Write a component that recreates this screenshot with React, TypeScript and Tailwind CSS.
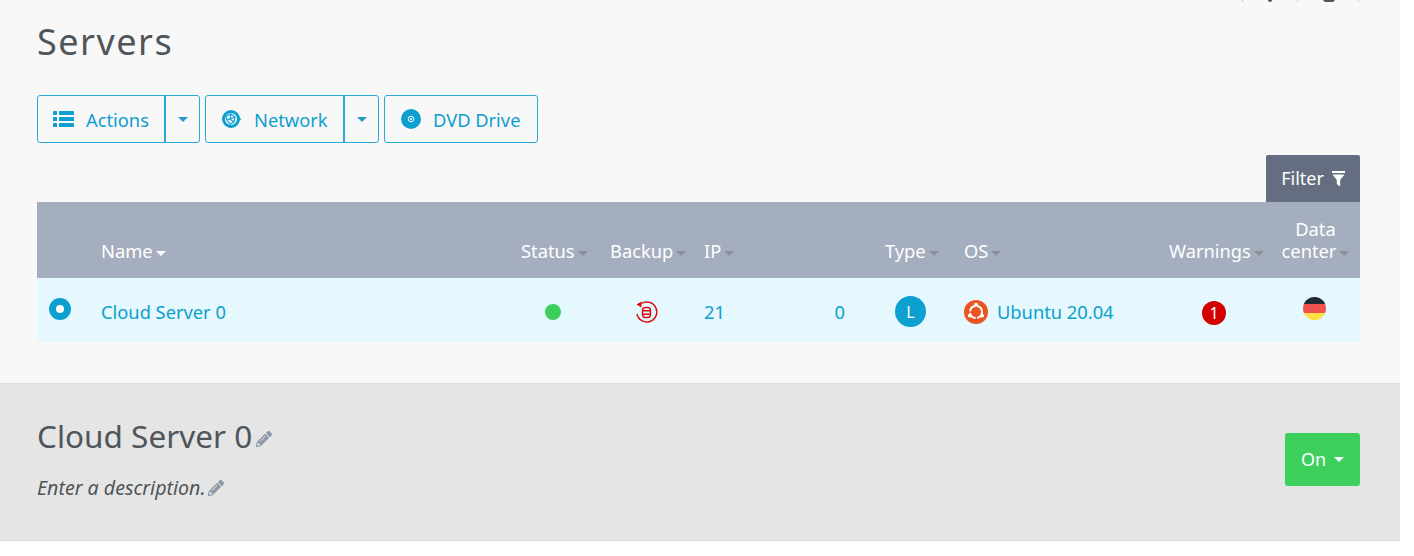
import React from "react";
import { FaPencilAlt } from "react-icons/fa";

const Caret = ({ className }: { className: string }) => (
    <span className={`inline-block w-0 h-0 border-x-[5px] border-x-transparent border-t-[5px] ${className}`} />
);

const ListIcon = () => (
    <svg width="21" height="16" viewBox="0 0 21 16" fill="#0d9fd0">
        <rect x="0" y="0" width="4" height="4" rx="0.5" />
        <rect x="6" y="0" width="15" height="4" rx="0.5" />
        <rect x="0" y="6" width="4" height="4" rx="0.5" />
        <rect x="6" y="6" width="15" height="4" rx="0.5" />
        <rect x="0" y="12" width="4" height="4" rx="0.5" />
        <rect x="6" y="12" width="15" height="4" rx="0.5" />
    </svg>
);

const NetworkIcon = () => (
    <svg width="20" height="18" viewBox="0 0 20 18">
        <circle cx="9" cy="9" r="7.5" fill="none" stroke="#0d9fd0" strokeWidth="3" />
        <path d="M16.5 7l3 2-3 2z" fill="#0d9fd0" />
        <path d="M4 6l5-2 4 3-1 5-4 2-3-4zM9 4l-1 5 5-2M8 9l-3 1M8 9l4 3" fill="none" stroke="#0d9fd0" strokeWidth="1.2" />
    </svg>
);

const DvdIcon = () => (
    <svg width="20" height="20" viewBox="0 0 20 20">
        <circle cx="10" cy="10" r="10" fill="#0d9fd0" />
        <circle cx="10" cy="10" r="2.8" fill="none" stroke="#fff" strokeWidth="1" />
        <circle cx="10" cy="10" r="1" fill="#fff" />
    </svg>
);

const BackupIcon = () => (
    <svg width="24" height="24" viewBox="0 0 24 24" fill="none" stroke="#d90b0b" strokeWidth="1.4">
        <path d="M6.5 3.5A10 10 0 1 1 2 14" />
        <path d="M1.5 4.5L6.5 1.5V7.5z" fill="#d90b0b" stroke="none" />
        <rect x="7.5" y="7.5" width="8" height="10" rx="3" />
        <path d="M7.5 10.8h8M7.5 14.2h8" />
    </svg>
);

const UbuntuIcon = () => (
    <svg width="24" height="24" viewBox="0 0 24 24">
        <circle cx="12" cy="12" r="12" fill="#e95420" />
        <circle cx="12" cy="12" r="6" fill="none" stroke="#fff" strokeWidth="2" strokeDasharray="8 1.5" />
        <circle cx="12" cy="4.6" r="1.8" fill="#fff" />
        <circle cx="5.6" cy="15.7" r="1.8" fill="#fff" />
        <circle cx="18.4" cy="15.7" r="1.8" fill="#fff" />
    </svg>
);

const FlagIcon = () => (
    <span className="flex flex-col w-[23px] h-[23px] rounded-full overflow-hidden">
        <span className="h-[7px] bg-[#1f2a33]" />
        <span className="h-[9px] bg-[#ef5350]" />
        <span className="h-[7px] bg-[#fde047]" />
    </span>
);

const Head = ({ label, active, center }: { label: React.ReactNode; active?: boolean; center?: boolean }) => (
    <th className={`font-normal align-bottom pb-[16px] leading-[22px] whitespace-nowrap ${center ? "text-center" : "text-left px-3"}`}>
        {label}
        <Caret className={`ml-[3px] align-middle ${active ? "border-t-white" : "border-t-[#8a8f99]"}`} />
    </th>
);

export default function App() {
    return (
        <div className="w-[1414px] h-[556px] bg-white overflow-hidden font-['Noto_Sans',sans-serif]">
            <div className="w-[1400px]">
                <div className="relative h-[383px] bg-[#f8f8f8] pl-[37px] pr-[40px] pt-[18px]">
                    <div className="absolute top-[-4px] left-[1242px] flex items-center gap-[25px]">
                        <span className="w-[1px] h-[6px] bg-[#ccc]" />
                        <span className="w-[4px] h-[6px] rounded-full bg-[#555]" />
                        <span className="w-[1px] h-[6px] bg-[#ccc]" />
                        <span className="w-[12px] h-[6px] rounded-full bg-[#555]" />
                        <span className="w-[1px] h-[6px] bg-[#ccc] -ml-[2px]" />
                    </div>
                    <h1 className="text-[36px] leading-[48px] tracking-[1.5px] text-[#4f5559]">Servers</h1>

                    <div className="flex gap-[5px] mt-[29px] text-[18.3px] text-[#0d9fd0]">
                        <div className="flex h-[48px] border border-[#2aa9d4] rounded-[3px]">
                            <div className="flex items-center w-[128px] pl-[15px] gap-[12px] border-r-2 border-[#2aa9d4]">
                                <ListIcon />
                                <span className="pt-[2px]">Actions</span>
                            </div>
                            <div className="flex items-center justify-center w-[33px]">
                                <Caret className="border-t-[#2a9ac4]" />
                            </div>
                        </div>
                        <div className="flex h-[48px] border border-[#2aa9d4] rounded-[3px]">
                            <div className="flex items-center w-[139px] pl-[16px] gap-[12px] border-r-2 border-[#2aa9d4]">
                                <NetworkIcon />
                                <span className="pt-[2px]">Network</span>
                            </div>
                            <div className="flex items-center justify-center w-[33px]">
                                <Caret className="border-t-[#2a9ac4]" />
                            </div>
                        </div>
                        <div className="flex items-center h-[48px] w-[154px] pl-[16px] gap-[12px] border border-[#2aa9d4] rounded-[3px]">
                            <DvdIcon />
                            <span className="pt-[2px]">DVD Drive</span>
                        </div>
                    </div>

                    <div className="flex justify-end mt-[12px]">
                        <div className="flex items-center justify-center gap-[8px] w-[94px] h-[47px] bg-[#656d80] rounded-t-[2px] text-[18px] text-white">
                            Filter
                            <svg width="13" height="16" viewBox="0 0 13 16" fill="#fff">
                                <rect x="0" y="0" width="13" height="2" />
                                <path d="M0.5 3.5h12L8.2 9v6.5L4.8 13V9z" />
                            </svg>
                        </div>
                    </div>

                    <table className="w-full table-fixed border-collapse text-[18.3px]">
                        <colgroup>
                            <col className="w-[52px]" />
                            <col className="w-[420px]" />
                            <col className="w-[89px]" />
                            <col className="w-[94px]" />
                            <col className="w-[181px]" />
                            <col className="w-[79px]" />
                            <col className="w-[205px]" />
                            <col className="w-[114px]" />
                            <col className="w-[89px]" />
                        </colgroup>
                        <thead>
                            <tr className="h-[76px] bg-[#a5aebe] text-white">
                                <th />
                                <Head label="Name" active />
                                <Head label="Status" />
                                <Head label="Backup" />
                                <Head label="IP" />
                                <Head label="Type" />
                                <Head label="OS" />
                                <Head label="Warnings" />
                                <Head label={<>Data<br />center</>} center />
                            </tr>
                        </thead>
                        <tbody>
                            <tr className="h-[64px] bg-[#e4f8fd] text-[#0d9fd0] [&>td]:pt-[3px]">
                                <td>
                                    <span className="block w-[22px] h-[22px] ml-[12px] mb-[6px] rounded-full border-[7px] border-[#0d9fd0] bg-white" />
                                </td>
                                <td className="px-3">Cloud Server 0</td>
                                <td>
                                    <span className="block w-[16px] h-[16px] ml-[36px] rounded-full bg-[#3ccf5c]" />
                                </td>
                                <td className="pl-[37px]"><BackupIcon /></td>
                                <td className="px-3">
                                    <div className="flex justify-between w-[141px]"><span>21</span><span>0</span></div>
                                </td>
                                <td>
                                    <span className="flex items-center justify-center w-[31px] h-[31px] ml-[22px] rounded-full bg-[#0d9fd0] text-white text-[16px]">L</span>
                                </td>
                                <td className="px-3">
                                    <div className="flex items-center gap-[9px]"><UbuntuIcon />Ubuntu 20.04</div>
                                </td>
                                <td>
                                    <span className="flex items-center justify-center w-[24px] h-[24px] ml-[45px] mt-[2px] rounded-full bg-[#d40000] text-white text-[16px]">1</span>
                                </td>
                                <td>
                                    <span className="block ml-[32px] mb-[7px]"><FlagIcon /></span>
                                </td>
                            </tr>
                        </tbody>
                    </table>
                </div>

                <div className="flex items-start justify-between h-[158px] bg-[#e5e5e5] border-y border-[#dcdcdc] pl-[37px] pr-[40px]">
                    <div>
                        <div className="flex items-center mt-[29px] h-[46px] text-[31.5px] text-[#4f5559]">
                            Cloud Server 0
                            <FaPencilAlt className="ml-[4px] mt-[6px] text-[#8d97a8] text-[16px]" />
                        </div>
                        <div className="flex items-center mt-[14px] text-[19.6px] italic text-[#4f5559]">
                            Enter a description.
                            <FaPencilAlt className="ml-[3px] text-[#8d97a8] text-[16px]" />
                        </div>
                    </div>
                    <div className="flex items-center justify-center gap-[8px] w-[75px] h-[53px] mt-[49px] bg-[#3ccf5c] rounded-[3px] text-[18px] text-white">
                        On
                        <Caret className="border-t-white" />
                    </div>
                </div>
            </div>
        </div>
    );
}
